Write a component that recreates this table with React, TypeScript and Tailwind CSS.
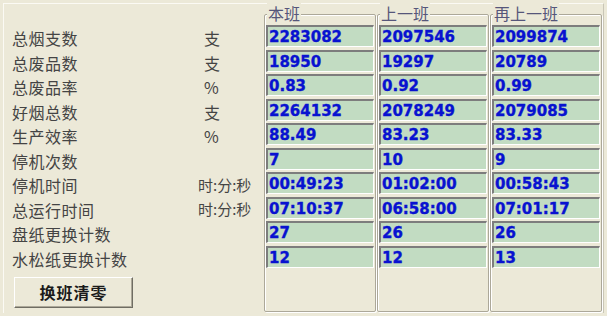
import React from "react";

const rows: { label: string; unit: string; values: string[] }[] = [
  { label: "总烟支数", unit: "支", values: ["2283082", "2097546", "2099874"] },
  { label: "总废品数", unit: "支", values: ["18950", "19297", "20789"] },
  { label: "总废品率", unit: "%", values: ["0.83", "0.92", "0.99"] },
  { label: "好烟总数", unit: "支", values: ["2264132", "2078249", "2079085"] },
  { label: "生产效率", unit: "%", values: ["88.49", "83.23", "83.33"] },
  { label: "停机次数", unit: "", values: ["7", "10", "9"] },
  { label: "停机时间", unit: "时:分:秒", values: ["00:49:23", "01:02:00", "00:58:43"] },
  { label: "总运行时间", unit: "时:分:秒", values: ["07:10:37", "06:58:00", "07:01:17"] },
  { label: "盘纸更换计数", unit: "", values: ["27", "26", "26"] },
  { label: "水松纸更换计数", unit: "", values: ["12", "12", "13"] },
];

const shifts = ["本班", "上一班", "再上一班"];

const cjk = "font-['Noto_Sans_CJK_SC',sans-serif]";

function GroupBox({ title, col }: { title: string; col: number }) {
  return (
    <div className="relative flex-1 pt-[10px]">
      <div className="h-full border border-[#aca899] shadow-[inset_1px_1px_0_#fff,1px_1px_0_#fff] rounded-[2px] pt-[10px] px-[1px]">
        <div className="flex flex-col gap-[2.5px]">
          {rows.map((r) => (
            <div
              key={r.label}
              className="h-[22px] bg-[#c2dcc2] border-t-2 border-l-2 border-t-[#7d7d7d] border-l-[#7d7d7d] border-b border-r border-b-white border-r-white flex items-center pl-[1px] pt-[2px] font-['DejaVu_Sans',sans-serif] font-bold text-[15px] text-[#0812d0] leading-none [-webkit-text-stroke:0.35px_#0812d0]"
            >
              {r.values[col]}
            </div>
          ))}
        </div>
      </div>
      <div className={`absolute left-[3px] top-[-1px] px-[1px] bg-[#ece9d8] text-[16px] leading-[20px] text-[#56567a] ${cjk}`}>
        {title}
      </div>
    </div>
  );
}

export default function App() {
  return (
    <div className="w-[607px] h-[316px] bg-[#ece9d8] p-[3px]">
      <div className="h-full border-t border-l border-t-[#fbfaf4] border-l-[#fbfaf4] border-r border-r-[#c9c6b6] flex pr-[1px]">
        <div className="w-[260px] flex flex-col pt-[23px] pl-[8px]">
          <div className="flex flex-col gap-[2.5px]">
            {rows.map((r) => (
              <div key={r.label} className={`h-[22px] flex items-center text-[16px] text-[#444] ${cjk}`}>
                <span className="w-[186px] tracking-[0.5px]">{r.label}</span>
                <span className={r.unit.length > 1 ? "text-[15px]" : "pl-[6px] text-[16px]"}>{r.unit}</span>
              </div>
            ))}
          </div>
          <button
            className={`mt-[7px] ml-[2px] w-[119px] h-[31px] bg-[#ece9d8] border border-t-white border-l-white border-b-[#6f6d63] border-r-[#6f6d63] shadow-[inset_-1px_-1px_0_#aca899] text-[16px] font-bold text-[#1a1a1a] tracking-[1px] ${cjk}`}
          >
            换班清零
          </button>
        </div>
        <div className="flex-1 flex gap-[1px] pb-[1px]">
          {shifts.map((s, i) => (
            <GroupBox key={s} title={s} col={i} />
          ))}
        </div>
      </div>
    </div>
  );
}
